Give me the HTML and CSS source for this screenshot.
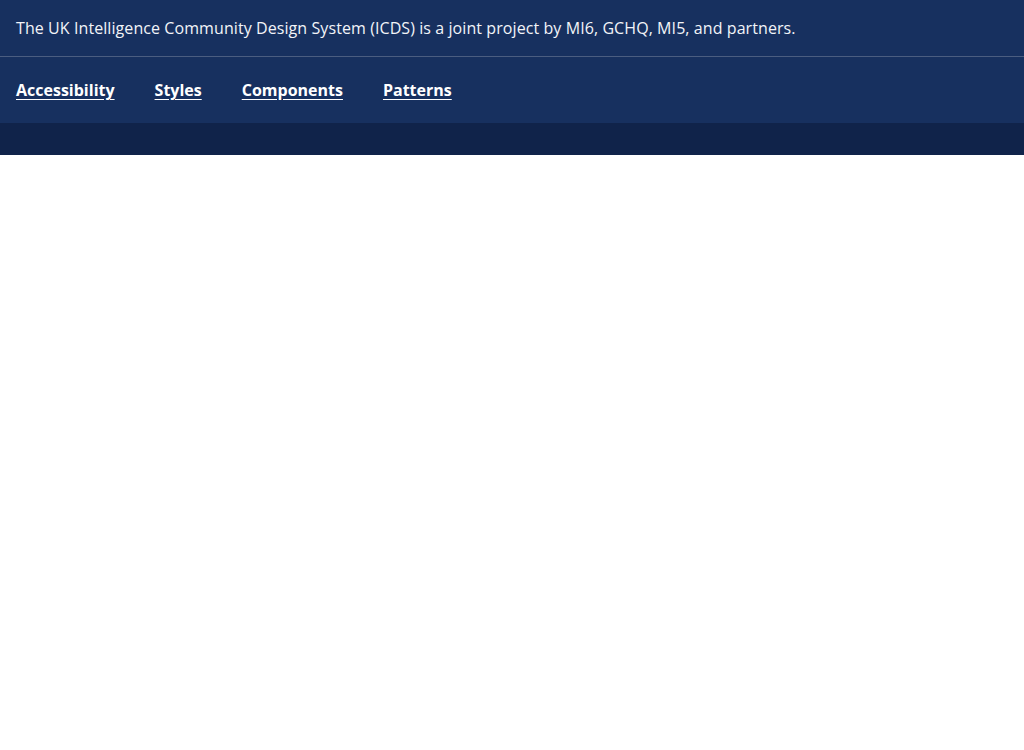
FILE: index.html
```html
<!DOCTYPE html>
<html lang="en">
<head>
<meta charset="utf-8">
<title>ICDS</title>
<link rel="stylesheet" href="styles.css">
</head>
<body>
<header class="header">
  <div class="intro">
    <p class="intro-text">The UK Intelligence Community Design System (ICDS) is a joint project by MI6, GCHQ, MI5, and partners.</p>
  </div>
  <nav class="nav">
    <a class="nav-link" href="#">Accessibility</a>
    <a class="nav-link" href="#">Styles</a>
    <a class="nav-link" href="#">Components</a>
    <a class="nav-link" href="#">Patterns</a>
  </nav>
  <div class="band"></div>
</header>
</body>
</html>
```

FILE: styles.css
```css
html, body {
  margin: 0;
  padding: 0;
  background: #ffffff;
  font-family: "Open Sans", "Noto Sans", sans-serif;
}
.header {
  background: #17305f;
  color: #ffffff;
}
.intro {
  height: 56px;
  display: flex;
  align-items: center;
  padding: 0 16px;
  border-bottom: 1px solid #4b5d80;
}
.intro-text {
  margin: 0;
  font-size: 16px;
  line-height: 24px;
  letter-spacing: 0.08px;
  color: #f2f4f8;
}
.nav {
  height: 66px;
  display: flex;
  align-items: center;
  gap: 40px;
  padding: 0 16px;
}
.nav-link {
  color: #ffffff;
  font-weight: 700;
  font-size: 16px;
  line-height: 24px;
  text-decoration: underline;
  text-underline-offset: 3px;
}
.band {
  height: 32px;
  background: #10234a;
}
```
